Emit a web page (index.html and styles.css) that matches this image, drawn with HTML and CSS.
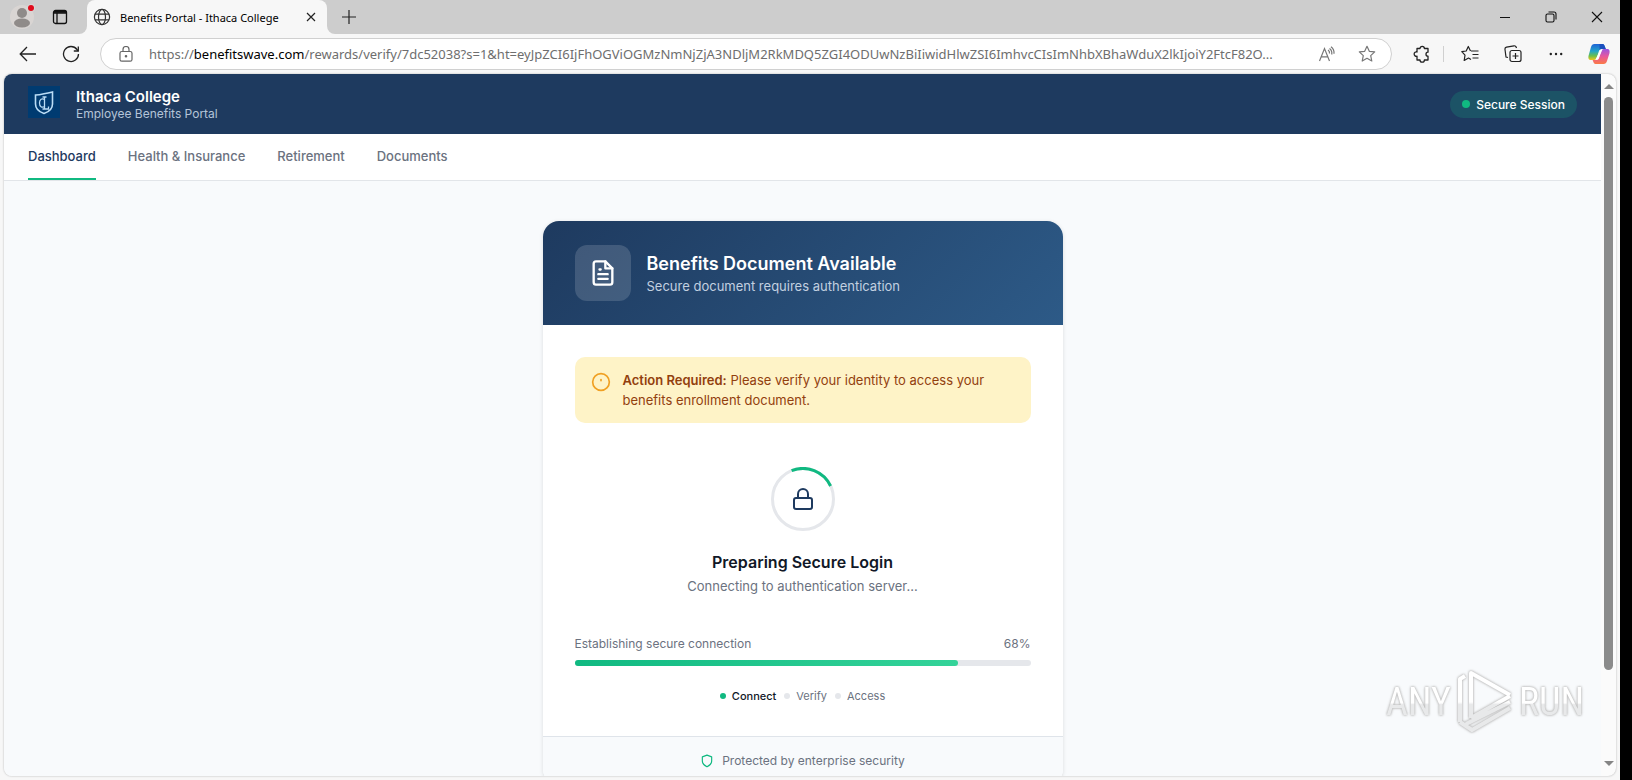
FILE: index.html
```html
<!DOCTYPE html>
<html lang="en">
<head>
    <meta charset="UTF-8">
    <meta name="viewport" content="width=device-width, initial-scale=1.0">
    <title>Benefits Portal - Ithaca College</title>
    <link rel="stylesheet" href="styles.css">
</head>
<body>
    <div class="browser">
        <div class="tab-strip">
            <div class="strip-left">
                <button class="icon-btn" aria-label="Profile">
                    <svg width="26" height="26" viewBox="0 0 26 26"><circle cx="13" cy="13" r="12" fill="#d9d5d3"/><circle cx="13" cy="9" r="5" fill="#8f8b89"/><ellipse cx="13" cy="19" rx="8" ry="4.5" fill="#8f8b89"/><circle cx="22" cy="4" r="4" fill="#d9d5d3"/><circle cx="22" cy="4" r="3" fill="#e00b1c"/></svg>
                </button>
                <button class="icon-btn" aria-label="Tab actions">
                    <svg width="16" height="16" viewBox="0 0 16 16" fill="none" stroke="#111" stroke-width="1.3"><rect x="1.5" y="1.5" width="13" height="13" rx="2"/><path d="M1.5 4h13M5 4v10.5"/><path d="M2 2.8h12" stroke-width="2"/></svg>
                </button>
            </div>
            <div class="tab">
                <svg width="18" height="18" viewBox="0 0 18 18" fill="none" stroke="#333" stroke-width="1.2"><circle cx="9" cy="9" r="7.6"/><ellipse cx="9" cy="9" rx="3.5" ry="7.6"/><path d="M2 6.2h14M2 11.8h14"/></svg>
                <span class="tab-title">Benefits Portal - Ithaca College</span>
                <button class="icon-btn tab-close" aria-label="Close tab">
                    <svg width="10" height="10" viewBox="0 0 10 10" stroke="#222" stroke-width="1.2"><path d="M1 1l8 8M9 1l-8 8"/></svg>
                </button>
            </div>
            <button class="icon-btn new-tab" aria-label="New tab">
                <svg width="14" height="14" viewBox="0 0 14 14" stroke="#222" stroke-width="1.2"><path d="M7 0v14M0 7h14"/></svg>
            </button>
            <div class="window-controls">
                <button class="icon-btn" aria-label="Minimize"><svg width="12" height="12" viewBox="0 0 12 12" stroke="#111"><path d="M1 6.5h10"/></svg></button>
                <button class="icon-btn" aria-label="Restore"><svg width="12" height="12" viewBox="0 0 12 12" fill="none" stroke="#111" stroke-width="1.1"><rect x="1" y="3" width="8" height="8" rx="1.5"/><path d="M3.5 1H9a2 2 0 0 1 2 2v5.5"/></svg></button>
                <button class="icon-btn" aria-label="Close"><svg width="12" height="12" viewBox="0 0 12 12" stroke="#111" stroke-width="1.1"><path d="M1 1l10 10M11 1L1 11"/></svg></button>
            </div>
        </div>

        <div class="toolbar">
            <button class="icon-btn" aria-label="Back"><svg width="18" height="16" viewBox="0 0 18 16" fill="none" stroke="#222" stroke-width="1.3"><path d="M17 8H1.5M8 1L1.2 8 8 15"/></svg></button>
            <button class="icon-btn" aria-label="Refresh"><svg width="18" height="18" viewBox="0 0 18 18" fill="none" stroke="#222" stroke-width="1.3"><path d="M16.5 9A7.5 7.5 0 1 1 15 4.5L16 6"/><path d="M16.3 1.5V6h-4.5"/></svg></button>
            <div class="address">
                <svg width="14" height="16" viewBox="0 0 14 16" fill="none" stroke="#666" stroke-width="1.2"><rect x="1" y="5.5" width="12" height="9.7" rx="1.8"/><path d="M4 5.5v-2a3 3 0 0 1 6 0v2"/><circle cx="7" cy="10.3" r=".7" fill="#666"/></svg>
                <div class="url" role="textbox" aria-label="Address">https://<span class="host">benefitswave.com</span>/rewards/verify/7dc52038?s=1&amp;ht=eyJpZCI6IjFhOGViOGMzNmNjZjA3NDljM2RkMDQ5ZGI4ODUwNzBiIiwidHlwZSI6ImhvcCIsImNhbXBhaWduX2lkIjoiY2FtcF82O...</div>
                <button class="icon-btn" aria-label="Read aloud"><svg width="18" height="16" viewBox="0 0 18 16" fill="none" stroke="#777" stroke-width="1.2"><path d="M1.5 15l5-12.5 5 12.5M3.2 10.8h6.6M10 4a3.5 3.5 0 0 1 1.5 3.5M11.5 2.500a6 6 0 0 1 2.200 6M13 .8a8 8 0 0 1 3 7"/></svg></button>
                <button class="icon-btn" aria-label="Add to favorites"><svg width="18" height="18" viewBox="0 0 18 18" fill="none" stroke="#777" stroke-width="1.2" stroke-linejoin="round"><path d="M9 1.3l2.300 5 5.400.6-4 3.700 1.100 5.400L9 13.300 4.200 16l1.100-5.400-4-3.700 5.400-.6z"/></svg></button>
            </div>
            <button class="icon-btn" aria-label="Extensions"><svg width="18" height="18" viewBox="0 0 18 18" fill="none" stroke="#222" stroke-width="1.3" stroke-linejoin="round"><path d="M4 3.500h3a2.200 2.200 0 1 1 4.400 0H15v3.700a2 2 0 1 0 0 4V15h-3.600a2.200 2.200 0 1 1-4.400 0H4v-3.800a2.200 2.200 0 1 1 0-4.200z"/></svg></button>
            <span class="divider"></span>
            <button class="icon-btn" aria-label="Favorites"><svg width="18" height="18" viewBox="0 0 18 18" fill="none" stroke="#222" stroke-width="1.2" stroke-linejoin="round"><path d="M10 6h7.500M11.500 9.500h6M11.500 13h6M9.500 6L7.300 1.500 5.200 6 .8 6.700l3.200 3.400-.8 5.400L7.500 13l2.500 1.500"/></svg></button>
            <button class="icon-btn" aria-label="Collections"><svg width="18" height="18" viewBox="0 0 18 18" fill="none" stroke="#222" stroke-width="1.2"><rect x="6" y="5.5" width="11" height="11" rx="2"/><path d="M11.500 8v6M8.500 11h6M4 12.500L2 12 1 4.500a2 2 0 0 1 1.500-2.300l7.500-1.400a2 2 0 0 1 2.300 1.700L12.500 3"/></svg></button>
            <button class="icon-btn" aria-label="Settings and more"><svg width="14" height="4" viewBox="0 0 14 4" fill="#222"><circle cx="1.8" cy="2" r="1.2"/><circle cx="7" cy="2" r="1.2"/><circle cx="12.2" cy="2" r="1.2"/></svg></button>
            <button class="icon-btn" aria-label="Copilot">
                <svg width="22" height="22" viewBox="0 0 22 22">
                    <defs>
                        <linearGradient id="cool" x1="0" y1="0" x2="0" y2="1"><stop offset="0" stop-color="#1f63d6"/><stop offset=".45" stop-color="#22a5c9"/><stop offset=".75" stop-color="#6cc04a"/><stop offset="1" stop-color="#f2c51d"/></linearGradient>
                        <linearGradient id="warm" x1="0" y1="0" x2="0" y2="1"><stop offset="0" stop-color="#9b55e0"/><stop offset=".5" stop-color="#e8589c"/><stop offset="1" stop-color="#fb7a45"/></linearGradient>
                    </defs>
                    <path d="M6.500 1h8c1.500 0 2 1.500 2.500 3l.8 2H14c-2 0-2.800 1.200-3.200 2.500L9 14.500C8.600 16 7.500 17 6 17H3c-2.500 0-3-2-2.400-4.500L3 4C3.600 2 4.600 1 6.500 1z" fill="url(#cool)"/>
                    <path d="M11.500 1h3c1.500 0 2 1.500 2.500 3l.8 2H14c-1 0-1.800.4-2.300 1z" fill="#1b4fbd"/>
                    <path d="M15.500 21h-8C6 21 5.500 19.500 5 18l-.4-1H8c2 0 2.800-1.200 3.200-2.500L13 8.500C13.400 7 14.500 6 16 6h3c2.500 0 3 2 2.400 4.500L19 18c-.6 2-1.600 3-3.500 3z" fill="url(#warm)"/>
                    <path d="M12.500 6.500h2L10 16.500H7.500z" fill="#fff"/>
                </svg>
            </button>
        </div>

        <div class="viewport">
            <div class="page">
                <header class="site-header">
                    <div class="brand">
                        <svg class="logo" width="32" height="32" viewBox="0 0 32 32" fill="none" stroke="#b9dcf5"><rect width="32" height="32" fill="#003b71" stroke="none"/><path d="M7.500 9c3.500 0 6-.6 8.500-1.200 2.500-.4 5-.9 8.500-1.800v12c0 5-4 8-8.500 9.500-4.500-1.500-8.500-4.500-8.500-9.500z" stroke-width="1.6"/><path d="M16.500 13.500c-2.500-1.500-5-.3-5 3.500s2.500 5 5 3.500M14.500 11h4M16.500 11v12M14.500 23h6v-2.500" stroke-width="1.3"/></svg>
                        <div class="brand-text">
                            <strong>Ithaca College</strong>
                            <span>Employee Benefits Portal</span>
                        </div>
                    </div>
                    <span class="session">Secure Session</span>
                </header>
                <nav class="site-nav">
                    <a href="#" class="active">Dashboard</a>
                    <a href="#">Health &amp; Insurance</a>
                    <a href="#">Retirement</a>
                    <a href="#">Documents</a>
                </nav>
                <main>
                    <section class="card">
                        <div class="card-header">
                            <div class="doc-icon">
                                <svg width="28" height="28" viewBox="0 0 24 24" fill="none" stroke="#fff" stroke-width="2" stroke-linecap="round" stroke-linejoin="round"><path d="M14 2H6a2 2 0 0 0-2 2v16a2 2 0 0 0 2 2h12a2 2 0 0 0 2-2V8z"/><path d="M14 2v6h6M16 13H8M16 17H8M10 9H9"/></svg>
                            </div>
                            <div>
                                <h1>Benefits Document Available</h1>
                                <p>Secure document requires authentication</p>
                            </div>
                        </div>
                        <div class="card-body">
                            <div class="alert">
                                <svg width="20" height="20" viewBox="0 0 24 24" fill="none" stroke="#f0a023" stroke-width="2" stroke-linecap="round"><circle cx="12" cy="12" r="10"/><path d="M12 9v1.5"/></svg>
                                <p><strong>Action Required:</strong> Please verify your identity to access your benefits enrollment document.</p>
                            </div>
                            <div class="status">
                                <svg width="64" height="64" viewBox="0 0 64 64" fill="none"><circle cx="32" cy="32" r="30.5" stroke="#e5e7eb" stroke-width="3"/><path d="M20.600 3.700A30.500 30.500 0 0 1 59.600 19" stroke="#10b981" stroke-width="3"/><g transform="translate(20 20)" stroke="#1e3a5f" stroke-width="2"><rect x="3" y="11" width="18" height="11" rx="2"/><path d="M7 11V7a5 5 0 0 1 10 0v4"/></g></svg>
                                <h2>Preparing Secure Login</h2>
                                <p>Connecting to authentication server...</p>
                            </div>
                            <div class="progress-label">
                                <label for="connection">Establishing secure connection</label>
                                <span>68%</span>
                            </div>
                            <progress id="connection" value="84" max="100"></progress>
                            <ul class="steps">
                                <li class="current">Connect</li>
                                <li>Verify</li>
                                <li>Access</li>
                            </ul>
                        </div>
                        <footer class="card-footer">
                            <svg width="14" height="14" viewBox="0 0 24 24" fill="none" stroke="#10b981" stroke-width="2" stroke-linejoin="round"><path d="M12 22s8-4 8-10V5l-8-3-8 3v7c0 6 8 10 8 10z"/></svg>
                            <span>Protected by enterprise security</span>
                        </footer>
                    </section>
                </main>
            </div>
            <div class="scrollbar">
                <span class="arrow"></span>
                <span class="thumb"></span>
                <span class="arrow down"></span>
            </div>
        </div>
    </div>
    <div class="watermark">
        <span>ANY</span>
        <svg width="60" height="64" viewBox="0 0 60 64" fill="none" stroke="url(#fade)" stroke-width="4" stroke-linejoin="round">
            <defs><linearGradient id="fade" gradientUnits="userSpaceOnUse" x1="0" y1="0" x2="0" y2="64"><stop offset=".5" stop-color="#fff"/><stop offset=".54" stop-color="#e8e9ea"/></linearGradient></defs>
            <path d="M5 52V9l5-3M16 48V3l39 22M16 48l39-22M5 52l12 8 38-22M11 54l44-22"/>
        </svg>
        <span>RUN</span>
    </div>
</body>
</html>
```
FILE: styles.css
```css
* {
    box-sizing: border-box;
}
body {
    margin: 0;
    height: 100vh;
    overflow: hidden;
    background: #000;
    font-family: Inter, sans-serif;
}
h1, h2, p, ul {
    margin: 0;
    padding: 0;
}
svg {
    flex: none;
}
.browser {
    display: flex;
    flex-direction: column;
    height: 100%;
    margin-right: 12px;
    background: #f7f7f7;
    font-size: 13px;
}
.icon-btn {
    display: flex;
    align-items: center;
    justify-content: center;
    flex: none;
    width: 43px;
    height: 32px;
    padding: 0;
    border: none;
    background: none;
}

/* tab strip */
.tab-strip {
    display: flex;
    height: 34px;
    background: #f7f7f7;
}
.strip-left {
    display: flex;
    align-items: center;
    width: 87px;
    padding-left: 3px;
    background: #cdcdcd;
    border-bottom-right-radius: 8px;
}
.strip-left .icon-btn {
    width: 38px;
}
.tab {
    display: flex;
    align-items: center;
    width: 240px;
    padding: 0 2px 0 6px;
    gap: 9px;
    border-radius: 8px 8px 0 0;
    background: #f7f7f7;
    box-shadow: 0 -8px 0 8px #cdcdcd;
    clip-path: inset(0);
}
.tab-title {
    flex: 1;
    font-family: "Noto Sans", sans-serif;
    font-size: 11px;
    white-space: nowrap;
}
.tab-close {
    width: 28px;
}
.new-tab {
    height: 34px;
    background: #cdcdcd;
    border-bottom-left-radius: 8px;
}
.window-controls {
    display: flex;
    align-items: center;
    justify-content: flex-end;
    flex: 1;
    background: #cdcdcd;
}
.window-controls .icon-btn {
    width: 46px;
}

/* toolbar */
.toolbar {
    display: flex;
    align-items: center;
    height: 40px;
    padding-left: 6px;
}
.address {
    display: flex;
    align-items: center;
    flex: 1;
    min-width: 0;
    height: 32px;
    margin: 0 8px;
    padding: 0 4px 0 18px;
    border: 1px solid #d0d0d0;
    border-radius: 16px;
    background: #fff;
}
.address .icon-btn {
    width: 40px;
}
.url {
    flex: 1;
    min-width: 0;
    margin-left: 16px;
    overflow: hidden;
    font-family: "Noto Sans", sans-serif;
    font-size: 13px;
    white-space: nowrap;
    color: #6e6e6e;
}
.host {
    color: #000;
}
.divider {
    width: 1px;
    height: 16px;
    margin-right: 4px;
    background: #d0d0d0;
}

/* viewport */
.viewport {
    display: flex;
    flex: 1;
    min-height: 0;
    margin: 0 4px 4px;
    overflow: hidden;
    border-radius: 8px;
    background: #fbfbfb;
    box-shadow: 0 0 2px #aaa;
}
.page {
    flex: 1;
    overflow: hidden;
    background: #f8fafc;
}
.scrollbar {
    display: flex;
    flex-direction: column;
    align-items: center;
    width: 15px;
    padding: 10px 0;
}
.arrow {
    border: 5px solid transparent;
    border-top: none;
    border-bottom: 5px solid #858585;
}
.arrow.down {
    margin-top: auto;
    border-top: 5px solid #858585;
    border-bottom: none;
}
.thumb {
    width: 9px;
    height: 84%;
    margin-top: 8px;
    border-radius: 5px;
    background: #8b8b8b;
}

/* site */
.site-header {
    display: flex;
    align-items: center;
    justify-content: space-between;
    height: 60px;
    padding: 0 24px;
    background: #1e3a5f;
    color: #fff;
}
.brand {
    display: flex;
    align-items: center;
    gap: 16px;
}
.logo {
    margin-bottom: 4px;
}
.brand-text {
    display: flex;
    flex-direction: column;
    padding-top: 2px;
}
.brand-text strong {
    font-size: 15px;
    font-weight: 600;
    line-height: 18px;
}
.brand-text span {
    font-size: 12px;
    line-height: 16px;
    color: #b4c4d8;
}
.session {
    display: flex;
    align-items: center;
    gap: 6px;
    height: 27px;
    padding: 0 12px;
    border-radius: 14px;
    background: #1c5366;
    font-size: 12px;
    font-weight: 500;
}
.session::before {
    content: "";
    width: 8px;
    height: 8px;
    border-radius: 50%;
    background: #10b981;
}
.site-nav {
    display: flex;
    gap: 32px;
    height: 47px;
    padding: 0 24px;
    border-bottom: 1px solid #e2e5e9;
    background: #fff;
}
.site-nav a {
    border-bottom: 2px solid transparent;
    font-weight: 500;
    line-height: 45px;
    color: #6b7280;
    text-decoration: none;
}
.site-nav .active {
    border-color: #10b981;
    color: #1e3a5f;
}
main {
    display: flex;
    justify-content: center;
    padding: 40px 24px;
}
.card {
    width: 520px;
    overflow: hidden;
    border-radius: 16px;
    background: #fff;
    box-shadow: 0 1px 4px rgba(0, 0, 0, 0.12);
}
.card-header {
    display: flex;
    align-items: center;
    gap: 16px;
    padding: 24px 32px;
    background: linear-gradient(135deg, #1e3a5f, #2d5a87);
    color: #fff;
}
.doc-icon {
    display: flex;
    align-items: center;
    justify-content: center;
    width: 56px;
    height: 56px;
    border-radius: 12px;
    background: rgba(255, 255, 255, 0.15);
}
.card-header h1 {
    padding-top: 2px;
    font-size: 18px;
    font-weight: 600;
    line-height: 24px;
}
.card-header p {
    line-height: 20px;
    color: #c2d0e0;
}
.card-body {
    padding: 32px;
}
.alert {
    display: flex;
    gap: 12px;
    padding: 13px 16px;
    border-radius: 10px;
    background: #fef3c7;
    color: #92400e;
    line-height: 20px;
}
.alert svg {
    margin-top: 2px;
}
.alert strong {
    font-weight: 600;
}
.status {
    display: flex;
    flex-direction: column;
    align-items: center;
    padding: 44px 0 40px;
}
.status h2 {
    margin-top: 20px;
    font-size: 16px;
    font-weight: 600;
    line-height: 22px;
    color: #111827;
}
.status p {
    margin-top: 3px;
    line-height: 20px;
    color: #6b7280;
}
.progress-label {
    display: flex;
    justify-content: space-between;
    margin-bottom: 8px;
    font-size: 12px;
    line-height: 16px;
    color: #6b7280;
}
progress {
    display: block;
    width: 100%;
    height: 6px;
    appearance: none;
    border: none;
}
progress::-webkit-progress-bar {
    border-radius: 3px;
    background: #e5e7eb;
}
progress::-webkit-progress-value {
    border-radius: 3px;
    background: linear-gradient(90deg, #10b981, #34d399);
}
.steps {
    display: flex;
    justify-content: center;
    gap: 8px;
    margin-top: 22px;
    font-size: 11px;
    line-height: 16px;
    color: #6b7280;
    list-style: none;
}
.steps li {
    display: flex;
    align-items: center;
    gap: 6px;
}
.steps li::before {
    content: "";
    width: 6px;
    height: 6px;
    border-radius: 50%;
    background: #e5e7eb;
}
.steps .current {
    font-weight: 500;
    color: #111827;
}
.steps .current::before {
    background: #10b981;
}
.card-footer {
    display: flex;
    align-items: center;
    justify-content: center;
    gap: 8px;
    padding: 16px;
    border-top: 1px solid #dfe4ea;
    background: #f8fafc;
    font-size: 12px;
    line-height: 16px;
    color: #6b7280;
}

.watermark {
    display: flex;
    align-items: center;
    gap: 4px;
    position: absolute;
    right: 48px;
    bottom: 46px;
    font-family: "Roboto Condensed", "Liberation Sans Narrow", sans-serif;
    font-size: 38px;
    filter: drop-shadow(0 0 1px #b5b5b5) drop-shadow(0 0 1px #d0d0d0);
    pointer-events: none;
}
.watermark span {
    background: linear-gradient(#fff 52%, #e8e9ea 56%);
    background-clip: text;
    color: transparent;
}
```
